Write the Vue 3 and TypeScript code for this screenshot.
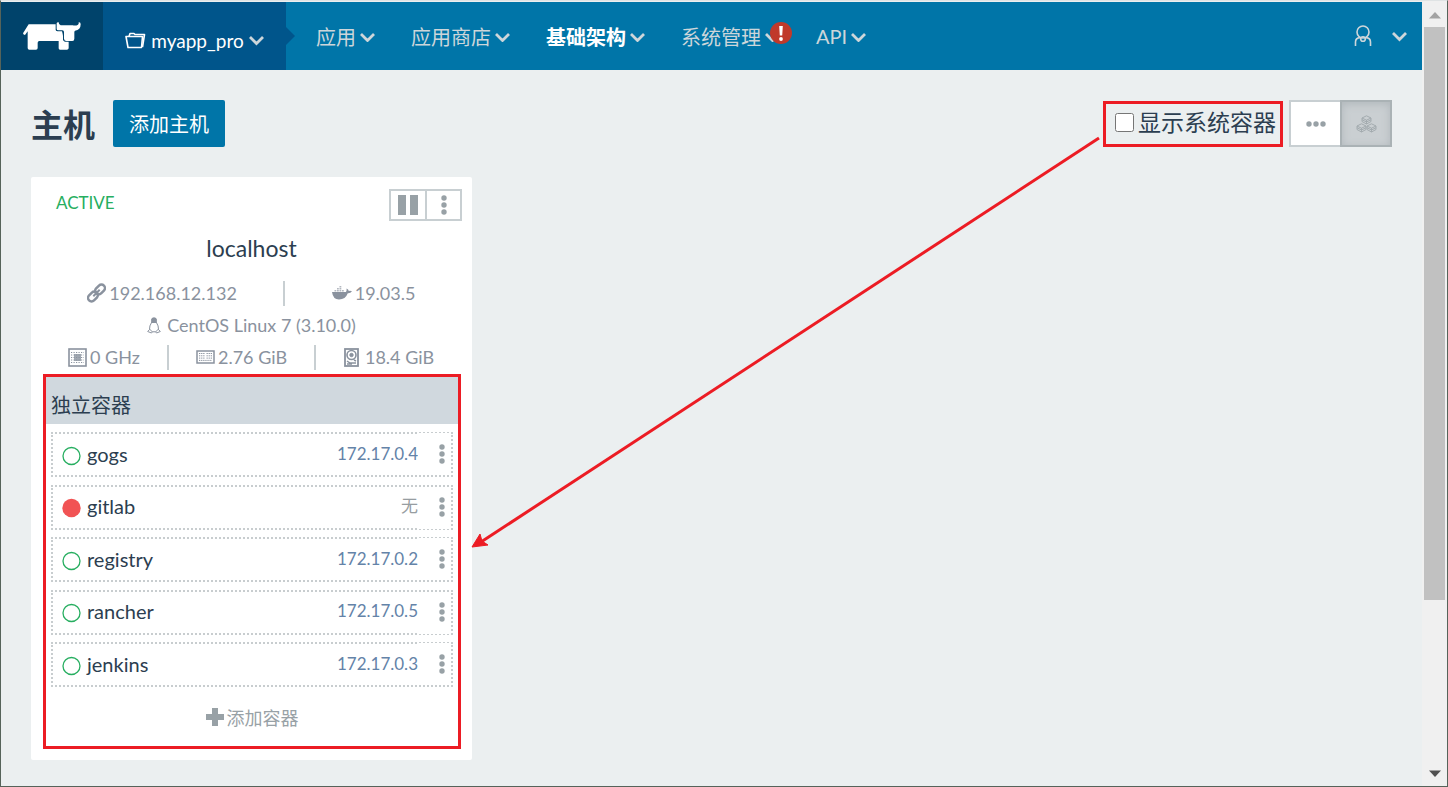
<script setup lang="ts">
import { ref } from 'vue'

interface NavItem {
  label: string
  active?: boolean
  alert?: boolean
}

interface Container {
  name: string
  ip: string
  running: boolean
}

const navItems: NavItem[] = [
  { label: '应用' },
  { label: '应用商店' },
  { label: '基础架构', active: true },
  { label: '系统管理', alert: true },
  { label: 'API' },
]

const containers: Container[] = [
  { name: 'gogs', ip: '172.17.0.4', running: true },
  { name: 'gitlab', ip: '无', running: false },
  { name: 'registry', ip: '172.17.0.2', running: true },
  { name: 'rancher', ip: '172.17.0.5', running: true },
  { name: 'jenkins', ip: '172.17.0.3', running: true },
]

const showSystem = ref(false)
</script>

<template>
  <div class="window">
    <div class="page">
      <header class="topbar">
        <a class="logo" href="#" aria-label="Rancher">
          <svg width="58" height="28" viewBox="67 68 174 84" fill="#fff">
            <path d="M84 75H165V92Q166 96 171 96H184Q186 103 187 110V121Q188 126 193 127H204V147Q203 151 199 151H178Q174 151 174 147V125H116Q111 125 111 130V146Q111 151 106 151H86Q81 151 81 146V96L73 107Q68 107 67 102Z" />
            <path d="M168 72Q169 68 174 69Q174 77 180 78H216Q226 80 232 76Q235 74 234 69Q240 68 240 75Q240 92 223 94L221 97V118Q221 125 215 125H197Q191 125 190 118V98Q190 93 185 93H173Q168 93 168 88Z" />
          </svg>
        </a>
        <button class="project" type="button">
          <svg width="21" height="17" viewBox="0 0 21 17" fill="none" stroke="#fff" stroke-width="1.6" stroke-linejoin="round">
            <path d="M1 4.500H17.500L16.500 15.500H3Z" /><path d="M4 4.500L5 1.500H9L10 2.500H19.500L17.500 15" />
          </svg>
          <span>myapp_pro</span>
          <svg class="chevron" width="15" height="11" viewBox="0 0 15 11"><path d="M1 2L7.500 8.500L14 2" /></svg>
        </button>
        <nav class="nav">
          <button v-for="item in navItems" :key="item.label" type="button" :class="{ active: item.active }">
            <span>{{ item.label }}</span>
            <svg class="chevron" width="15" height="11" viewBox="0 0 15 11"><path d="M1 3L7.500 9.500L14 3" /></svg>
            <svg v-if="item.alert" class="alert" width="22" height="22" viewBox="0 0 22 22">
              <circle cx="11" cy="11" r="11" fill="#c0392b" />
              <path d="M9.2 4H12.8L12.2 13.5H9.8Z" fill="#fff" /><circle cx="11" cy="17" r="1.9" fill="#fff" />
            </svg>
          </button>
        </nav>
        <button class="user" type="button" aria-label="User">
          <svg width="18" height="22" viewBox="0 0 18 22" fill="none" stroke="#cdd6da" stroke-width="1.6">
            <circle cx="9" cy="7" r="6" />
            <path d="M1.500 21V17Q1.500 13 6 12.600M16.500 21V17Q16.500 13 12 12.600" />
            <circle cx="9" cy="14" r="2.300" />
          </svg>
          <svg class="chevron" width="15" height="11" viewBox="0 0 15 11"><path d="M1 2L7.500 8.500L14 2" /></svg>
        </button>
      </header>

      <main class="main">
        <div class="toolbar">
          <h1>主机</h1>
          <button class="primary" type="button">添加主机</button>
          <label class="system-toggle">
            <input v-model="showSystem" type="checkbox">
            <span>显示系统容器</span>
          </label>
          <div class="views">
            <button type="button" aria-label="List view">
              <svg width="20" height="6" viewBox="0 0 20 6" fill="#98a1a6"><circle cx="3" cy="3" r="2.700" /><circle cx="10" cy="3" r="2.700" /><circle cx="17" cy="3" r="2.700" /></svg>
            </button>
            <button class="pressed" type="button" aria-label="Group view">
              <svg width="21" height="18" viewBox="0 0 21 18" fill="none" stroke="#a3abaf" stroke-width="1">
                <g id="cube"><path d="M10.500 .8L15 3V6.500L10.500 9L6 6.500V3ZM6 3L10.500 5.200L15 3M6 4.700L10.500 7L15 4.700M10.500 5V9" /></g>
                <use href="#cube" x="-5" y="8" /><use href="#cube" x="5" y="8" />
              </svg>
            </button>
          </div>
        </div>

        <article class="card">
          <div class="card-head">
            <span class="state">ACTIVE</span>
            <div class="actions">
              <button type="button" aria-label="Pause">
                <svg width="20" height="20" viewBox="0 0 20 20" fill="#98a1a6"><path d="M0 0H8V20H0ZM12 0H20V20H12Z" /></svg>
              </button>
              <button type="button" aria-label="More">
                <svg width="6" height="20" viewBox="0 0 6 20" fill="#98a1a6"><circle cx="3" cy="3" r="2.700" /><circle cx="3" cy="10" r="2.700" /><circle cx="3" cy="17" r="2.700" /></svg>
              </button>
            </div>
          </div>
          <h2><a href="#">localhost</a></h2>
          <div class="facts facts-two">
            <span>
              <svg width="19" height="20" viewBox="0 0 19 20" fill="none" stroke="#8a929e">
                <g transform="rotate(-45 9.500 10)"><rect x="-1" y="6.500" width="11" height="7" rx="3.500" stroke-width="2.500" /><rect x="9" y="6.500" width="11" height="7" rx="3.500" stroke-width="2.500" /><path d="M5 10H14" stroke-width="2" /></g>
              </svg>192.168.12.132
            </span>
            <span>
              <svg width="20" height="14" viewBox="0 0 20 14" fill="#8a929e">
                <path d="M0 6H14Q15 4 14.500 2.500Q16.500 3 16.800 5Q18.500 4.500 20 5.300Q18.500 7.500 15.800 7.300Q13.500 13.500 7 13.500Q1 13.500 0 6Z" />
                <path d="M2.500 4H4.300V5.500H2.500ZM5 4H6.800V5.500H5ZM7.500 4H9.300V5.500H7.500ZM10 4H11.800V5.500H10ZM5 2H6.800V3.500H5ZM7.500 2H9.300V3.500H7.500ZM7.500 0H9.300V1.500H7.500Z" opacity=".65" />
              </svg>19.03.5
            </span>
          </div>
          <div class="facts">
            <span class="system">
              <svg width="14" height="17" viewBox="0 0 14 17" fill="none" stroke="#8a929e">
                <path d="M4.800 5Q4 .8 7 .8Q10 .8 9.200 5Q11.800 9 11.500 12.500L13.300 14.500L9.500 16L8.500 14.800H5.500L4.500 16L.7 14.500L2.500 12.500Q2.200 9 4.800 5Z" />
                <path d="M5 1.500H9V5.500H5Z" fill="#8a929e" /><path d="M2.500 12L5.500 15M11.500 12L8.500 15" />
              </svg>CentOS Linux 7 (3.10.0)
            </span>
          </div>
          <div class="facts facts-three">
            <span>
              <svg width="19" height="19" viewBox="0 0 19 19" fill="none" stroke="#8a929e">
                <rect x="1" y="1" width="17" height="17" stroke-width="1.600" />
                <path d="M3 4.500H16M3 7H16M3 9.500H16M3 12H16M3 14.500H16" stroke-dasharray="1.200 1.300" />
                <rect x="6" y="6" width="7" height="7" fill="#8a929e" fill-opacity=".8" stroke="none" />
              </svg>0 GHz
            </span>
            <span>
              <svg width="19" height="14" viewBox="0 0 19 14" fill="none" stroke="#8a929e">
                <rect x="1" y="1" width="17" height="12" stroke-width="1.500" />
                <path d="M3 3.500H8.500M10.500 3.500H16M3 5.800H8.500M10.500 5.800H16M3 8.100H8.500M10.500 8.100H16M3 10.400H16" stroke-dasharray="1.300 .8" />
              </svg>2.76 GiB
            </span>
            <span class="disk">
              <svg width="15" height="19" viewBox="0 0 15 19" fill="none" stroke="#8a929e">
                <rect x="1" y="1" width="13" height="17" stroke-width="1.800" />
                <circle cx="7.500" cy="7" r="4.500" stroke-width="1.600" /><circle cx="7.500" cy="7" r="1.700" fill="#8a929e" />
                <path d="M3 13L6 15H12M3 16H8M10 12L12 13" stroke-width="1.500" />
              </svg>18.4 GiB
            </span>
          </div>

          <section class="group">
            <h3>独立容器</h3>
            <ul>
              <li v-for="c in containers" :key="c.name">
                <svg class="dot" width="20" height="20" viewBox="0 0 20 20">
                  <circle v-if="c.running" cx="9.500" cy="10" r="8.500" fill="none" stroke="#27ae60" stroke-width="1.300" />
                  <circle v-else cx="9.500" cy="10" r="9.200" fill="#f15354" />
                </svg>
                <a class="name" href="#">{{ c.name }}</a>
                <span class="ip" :class="{ none: !c.running }">{{ c.ip }}</span>
                <button type="button" :aria-label="c.name">
                  <svg width="6" height="20" viewBox="0 0 6 20" fill="#98a1a6"><circle cx="3" cy="3" r="2.700" /><circle cx="3" cy="10" r="2.700" /><circle cx="3" cy="17" r="2.700" /></svg>
                </button>
              </li>
            </ul>
            <button class="add" type="button">
              <svg width="18" height="18" viewBox="0 0 18 18" fill="#98a1a6"><path d="M6 0H12V6H18V12H12V18H6V12H0V6H6Z" /></svg>
              <span>添加容器</span>
            </button>
          </section>
        </article>
      </main>

      <svg class="pointer" width="640" height="420" viewBox="0 0 640 420">
        <path d="M628 3L10 407" stroke="#ec1c24" stroke-width="3" />
        <path d="M1 412L9 399L11 406L17 410Z" fill="#ec1c24" stroke="#ec1c24" />
      </svg>
    </div>

    <div class="scrollbar" aria-hidden="true">
      <svg width="12" height="7" viewBox="0 0 12 7"><path d="M0 6.500L6 0L12 6.500Z" fill="#a3a3a3" /></svg>
      <div class="track"><div class="thumb"></div></div>
      <svg width="12" height="7" viewBox="0 0 12 7"><path d="M0 .5L6 7L12 .5Z" fill="#505050" /></svg>
    </div>
  </div>
</template>

<style>
body {
  background: #ebeff0;
}
</style>

<style scoped>
* {
  box-sizing: border-box;
}

.window {
  display: flex;
  min-height: 100vh;
  border: 1px solid #56635a;
  border-top-color: #dfe3e4;
  background: #ebeff0;
  color: #2c3e50;
  font-family: Lato, "Noto Sans CJK SC", sans-serif;
  font-size: 18px;
}

button {
  margin: 0;
  padding: 0;
  border: 0;
  background: none;
  color: inherit;
  font: inherit;
  cursor: pointer;
}

a {
  color: inherit;
  text-decoration: none;
}

svg {
  display: block;
  flex: none;
}

.page {
  position: relative;
  flex: 1;
  min-width: 0;
  padding-top: 1px;
}

.topbar {
  display: flex;
  height: 68px;
  background: #0075a8;
  color: #cdd6da;
  font-size: 20px;
}

.chevron path {
  fill: none;
  stroke: #cdd6da;
  stroke-width: 2.8;
}

.logo {
  display: flex;
  align-items: center;
  justify-content: center;
  width: 102px;
  background: #00436b;
}

.project {
  position: relative;
  display: flex;
  align-items: center;
  justify-content: center;
  gap: 5px;
  width: 183px;
  padding-top: 8px;
  background: #00558b;
  color: #fff;
  font-size: 19px;
}

.project::after {
  content: "";
  position: absolute;
  top: 25px;
  left: 100%;
  border: 9px solid transparent;
  border-left-color: #00558b;
  border-right-width: 0;
}

.nav {
  display: flex;
  gap: 36px;
  padding-left: 30px;
}

.nav button {
  position: relative;
  display: flex;
  align-items: center;
  gap: 4px;
}

.nav .active {
  color: #fff;
  font-weight: 700;
}

.alert {
  position: absolute;
  top: 20px;
  right: -12px;
}

.user {
  display: flex;
  align-items: center;
  gap: 20px;
  margin-left: auto;
  padding-right: 15px;
}

.main {
  padding: 30px 30px 24px;
}

.toolbar {
  display: flex;
  align-items: center;
  height: 47px;
  margin-bottom: 30px;
}

h1,
h2,
h3 {
  margin: 0;
}

h1 {
  padding-bottom: 2px;
  font-size: 32px;
}

.primary {
  height: 47px;
  margin-left: 18px;
  padding: 0 16px;
  border-radius: 2px;
  background: #0075a8;
  color: #fff;
  font-size: 20px;
}

.system-toggle {
  display: flex;
  align-items: center;
  gap: 4px;
  height: 46px;
  margin-left: auto;
  padding: 0 4px 3px 9px;
  border: 3px solid #ec1c24;
  font-size: 23px;
  line-height: 32px;
}

.system-toggle input {
  width: 19px;
  height: 19px;
  margin: 0;
}

.views {
  display: flex;
  margin-left: 6px;
}

.views button {
  display: flex;
  align-items: center;
  justify-content: center;
  width: 51px;
  height: 47px;
  border: 2px solid #c8cfd2;
  border-right-width: 0;
  background: #fff;
}

.views .pressed {
  width: 52px;
  border: 2px solid #aab2b5;
  background: #cacfd2;
  box-shadow: inset 0 2px 8px #b0b7bb;
}

.card {
  width: 441px;
  padding: 12px 10px 11px;
  border-radius: 2px;
  background: #fff;
}

.card-head {
  display: flex;
  justify-content: space-between;
  height: 32px;
  margin-bottom: 12px;
  padding-left: 15px;
}

.state {
  color: #27ae60;
  font-size: 17px;
  line-height: 28px;
}

.actions {
  display: flex;
}

.actions button {
  display: flex;
  align-items: center;
  justify-content: center;
  width: 37px;
  border: 2px solid #c8cfd2;
}

.actions button:first-child {
  width: 36px;
  border-right-width: 0;
}

h2 {
  margin-bottom: 14px;
  font-size: 23px;
  font-weight: 400;
  line-height: 30px;
  text-align: center;
}

.facts {
  display: grid;
  align-items: center;
  height: 32px;
  color: #8a929e;
}

.facts-two {
  grid-template-columns: 58fr 42fr;
}

.facts-three {
  grid-template-columns: 128fr 147fr 146fr;
}

.facts span {
  display: flex;
  align-items: center;
  justify-content: center;
  gap: 3px;
  line-height: 25px;
}

.facts span:not(:last-child) {
  border-right: 2px solid #c8cfd2;
}

.facts .system,
.facts .disk {
  gap: 6px;
}

.group {
  margin: 1px 1px 0 2px;
  border: 3px solid #ec1c24;
}

h3 {
  padding: 9px 5px 0;
  background: #d0d8de;
  font-size: 20px;
  font-weight: 400;
  line-height: 38px;
}

ul {
  display: flex;
  flex-direction: column;
  justify-content: space-between;
  min-height: 255px;
  margin: 8px 5px 0;
  padding: 0;
  list-style: none;
}

li {
  display: flex;
  align-items: center;
  height: 45px;
  padding-left: 9px;
  border: 2px dotted #c8cdcf;
}

.dot {
  margin-top: 2px;
}

.name {
  padding: 0 0 2px 5px;
  font-size: 20px;
  line-height: 24px;
}

.ip {
  margin-left: auto;
  padding-bottom: 2px;
  color: #6483a8;
  font-size: 17px;
  line-height: 24px;
}

.none {
  color: #979da1;
}

li button {
  display: flex;
  align-items: center;
  align-self: stretch;
  justify-content: flex-end;
  width: 33px;
  padding: 0 6px 1px 0;
  background: #fff;
}

li:nth-child(odd) button {
  margin-top: -1px;
}

li:nth-child(even) button {
  margin-bottom: -1px;
}

.add {
  display: flex;
  align-items: center;
  justify-content: center;
  gap: 3px;
  width: 100%;
  height: 59px;
  color: #98a1a6;
}

.pointer {
  position: absolute;
  top: 134px;
  left: 470px;
  pointer-events: none;
}

.scrollbar {
  display: flex;
  flex-direction: column;
  align-items: center;
  gap: 8px;
  width: 25px;
  padding: 11px 2px 9px;
  background: #f0f0f0;
}

.track {
  flex: 1;
  align-self: stretch;
}

.thumb {
  height: 78%;
  background: #c1c1c1;
}
</style>
